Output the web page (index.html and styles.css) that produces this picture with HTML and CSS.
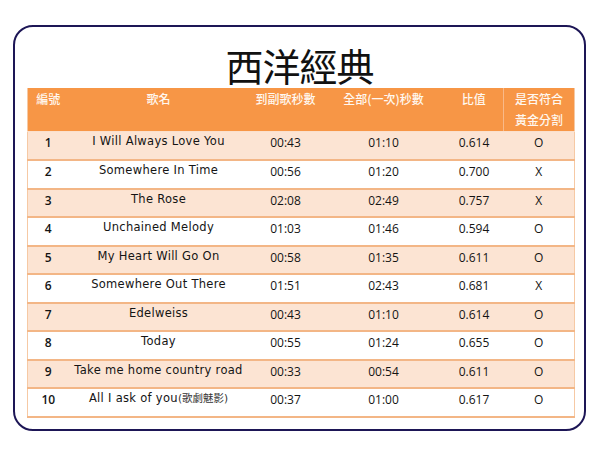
FILE: index.html
```html
<!DOCTYPE html>
<html lang="zh-Hant">
<head>
<meta charset="utf-8">
<title>西洋經典</title>
<link rel="stylesheet" href="styles.css">
</head>
<body>
<div class="frame">
  <h1 class="title">西洋經典</h1>
  <table class="songs">
    <colgroup>
      <col class="c-no"><col class="c-name"><col class="c-chorus"><col class="c-total"><col class="c-ratio"><col class="c-gold">
    </colgroup>
    <thead>
      <tr>
        <th>編號</th>
        <th>歌名</th>
        <th>到副歌秒數</th>
        <th>全部(一次)秒數</th>
        <th>比值</th>
        <th class="last">是否符合<br>黃金分割</th>
      </tr>
    </thead>
    <tbody>
      <tr class="odd"><td class="no">1</td><td class="name">I Will Always Love You</td><td>00:43</td><td>01:10</td><td>0.614</td><td>O</td></tr>
      <tr><td class="no">2</td><td class="name">Somewhere In Time</td><td>00:56</td><td>01:20</td><td>0.700</td><td>X</td></tr>
      <tr class="odd"><td class="no">3</td><td class="name">The Rose</td><td>02:08</td><td>02:49</td><td>0.757</td><td>X</td></tr>
      <tr><td class="no">4</td><td class="name">Unchained Melody</td><td>01:03</td><td>01:46</td><td>0.594</td><td>O</td></tr>
      <tr class="odd"><td class="no">5</td><td class="name">My Heart Will Go On</td><td>00:58</td><td>01:35</td><td>0.611</td><td>O</td></tr>
      <tr><td class="no">6</td><td class="name">Somewhere Out There</td><td>01:51</td><td>02:43</td><td>0.681</td><td>X</td></tr>
      <tr class="odd"><td class="no">7</td><td class="name">Edelweiss</td><td>00:43</td><td>01:10</td><td>0.614</td><td>O</td></tr>
      <tr><td class="no">8</td><td class="name">Today</td><td>00:55</td><td>01:24</td><td>0.655</td><td>O</td></tr>
      <tr class="odd"><td class="no">9</td><td class="name">Take me home country road</td><td>00:33</td><td>00:54</td><td>0.611</td><td>O</td></tr>
      <tr><td class="no">10</td><td class="name">All I ask of you<span class="cjk">(歌劇魅影)</span></td><td>00:37</td><td>01:00</td><td>0.617</td><td>O</td></tr>
    </tbody>
  </table>
</div>
</body>
</html>
```

FILE: styles.css
```css
html, body {
  margin: 0;
  padding: 0;
  background: #ffffff;
}

body {
  width: 600px;
  height: 450px;
  overflow: hidden;
  font-family: "Open Sans", "Noto Sans CJK TC", sans-serif;
  color: #141414;
}

.frame {
  box-sizing: border-box;
  margin: 25px 0 0 13px;
  width: 573px;
  height: 406px;
  border: 2px solid #1d1656;
  border-radius: 20px;
  padding: 18px 0 0 12px;
}

.title {
  margin: 0 0 3px 0;
  padding-right: 12px;
  text-align: center;
  font-family: "Noto Sans CJK TC", sans-serif;
  font-weight: 400;
  font-size: 38px;
  line-height: 40px;
  color: #111111;
  letter-spacing: -1px;
}

.songs {
  width: 547px;
  border-collapse: collapse;
  table-layout: fixed;
  border-left: 1px solid #f6c9a4;
  border-right: 1px solid #f6c9a4;
}

.c-no { width: 41px; }
.c-name { width: 180px; }
.c-chorus { width: 74px; }
.c-total { width: 122px; }
.c-ratio { width: 59px; }
.c-gold { width: 71px; }

.songs thead th {
  background: #f79646;
  color: #fff8f0;
  font-family: "Noto Sans CJK TC", sans-serif;
  font-weight: 500;
  font-size: 12px;
  line-height: 21px;
  height: 42px;
  padding: 0 0 1px 0;
  vertical-align: top;
  text-align: center;
  border-bottom: 1px solid #fbe0cc;
}

.songs thead th.last {
  border-left: 1px solid #f9b988;
}

.songs tbody tr {
  height: 28.5px;
}

.songs tbody td {
  height: 23.5px;
  padding: 3px 0 0 0;
  vertical-align: top;
  text-align: center;
  font-size: 12px;
  line-height: 16px;
  border-bottom: 2px solid #f3b686;
}

.songs tbody tr.odd td {
  background: #fce4d3;
}

.songs tbody td.no {
  font-weight: 600;
}

.songs tbody td.name {
  padding-top: 1px;
  height: 25.5px;
  font-family: "DejaVu Sans", sans-serif;
  font-size: 11.5px;
  letter-spacing: 0.3px;
  white-space: nowrap;
}

.songs .cjk {
  font-family: "DejaVu Sans", "Noto Sans CJK TC", sans-serif;
  color: #333333;
  font-size: 10.5px;
  letter-spacing: 0;
}
```
